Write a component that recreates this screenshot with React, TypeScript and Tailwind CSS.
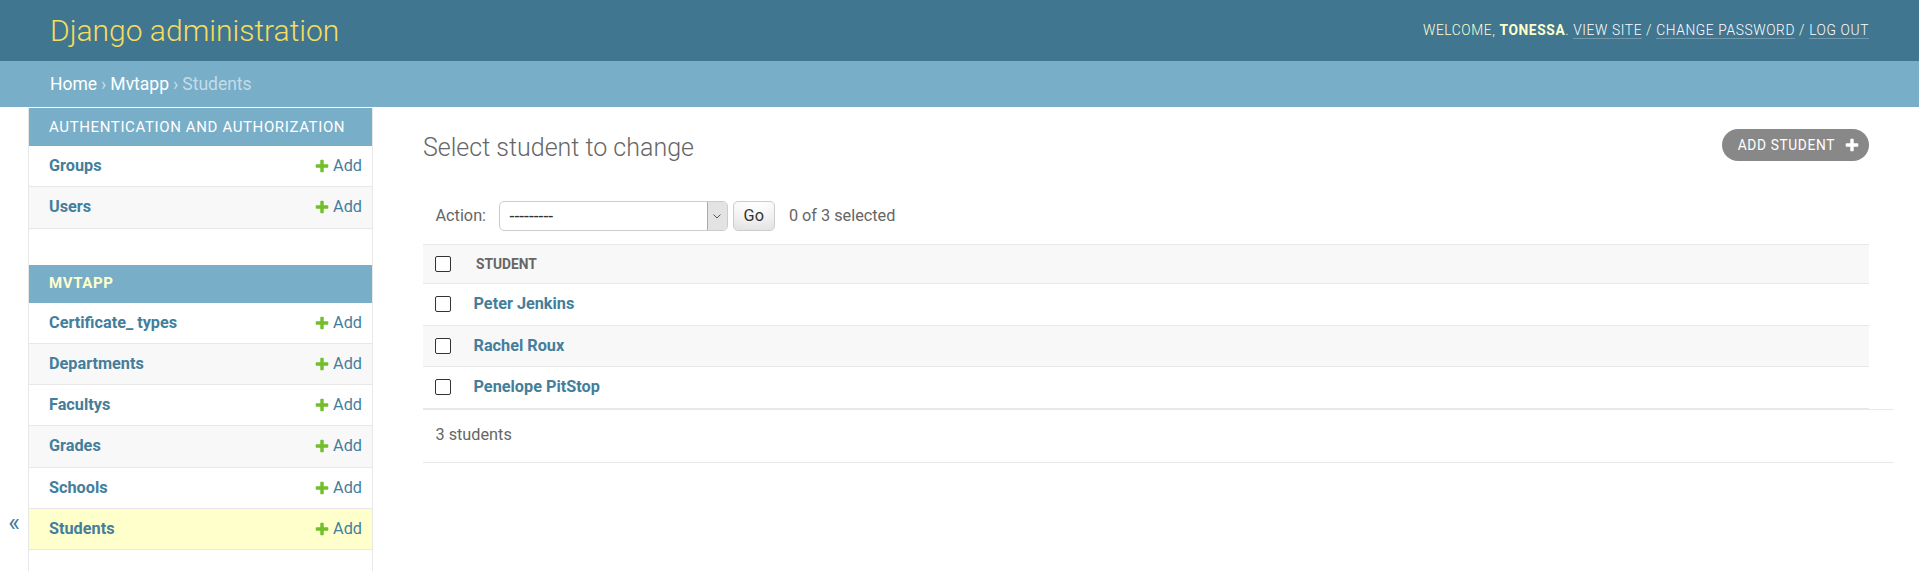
import React from "react";

// Font Awesome style plus, same one the admin uses for its add links
const plusPath =
  "M1600 796v192q0 40-28 68t-68 28h-416v416q0 40-28 68t-68 28h-192q-40 0-68-28t-28-68v-416h-416q-40 0-68-28t-28-68v-192q0-40 28-68t68-28h416v-416q0-40 28-68t68-28h192q40 0 68 28t28 68v416h416q40 0 68 28t28 68z";

const PlusIcon = ({ size, color }: { size: number; color: string }) => (
  <svg width={size} height={size} viewBox="0 0 1792 1792" aria-hidden="true">
    <path fill={color} d={plusPath} />
  </svg>
);

const apps = [
  {
    name: "Authentication and Authorization",
    current: false,
    models: ["Groups", "Users"],
  },
  {
    name: "Mvtapp",
    current: true,
    models: ["Certificate_ types", "Departments", "Facultys", "Grades", "Schools", "Students"],
  },
];

const students = ["Peter Jenkins", "Rachel Roux", "Penelope PitStop"];

const Checkbox = () => (
  <input
    type="checkbox"
    className="h-[16px] w-[16px] appearance-none rounded-[2px] border border-[#333] bg-white"
  />
);

const Sidebar = () => (
  <nav className="w-[344px] shrink-0 border-r border-[#e8e8e8] pt-px">
    {apps.map((app) => (
      <div key={app.name} className="mb-[36px]">
        <div
          className={`flex h-[38px] items-center bg-[#79aec8] pl-[20px] text-[15px] uppercase tracking-[0.625px] ${
            app.current ? "font-bold text-[#ffc]" : "text-white"
          }`}
        >
          {app.name}
        </div>
        {app.models.map((model, i) => {
          const selected = app.current && model === "Students";
          return (
            <div
              key={model}
              className={`flex h-[41.25px] items-center justify-between border-b border-[#e8e8e8] pl-[20px] pr-[10px] text-[16.25px] leading-[20px] ${
                selected ? "bg-[#ffc]" : i % 2 === 1 ? "bg-[#f8f8f8]" : "bg-white"
              }`}
            >
              <a className="font-bold text-[#447e9b]">{model}</a>
              <a className="flex items-center gap-[3px] text-[#447e9b]">
                <PlusIcon size={16} color="#70bf2b" />
                Add
              </a>
            </div>
          );
        })}
      </div>
    ))}
  </nav>
);

const App = () => {
  return (
    <div className="min-h-[571px] bg-white font-['Roboto','Liberation_Sans',sans-serif] text-[#333]">
      {/* Header */}
      <header className="flex h-[61px] items-center justify-between bg-[#417690] px-[50px]">
        <h1 className="text-[30px] font-light text-[#f5dd5d]">Django administration</h1>
        <div className="text-[13.75px] font-light uppercase tracking-[0.625px] text-[#ffc]">
          Welcome, <strong className="font-bold">Tonessa</strong>.{" "}
          <a className="border-b border-white/25 text-white">View site</a> /{" "}
          <a className="border-b border-white/25 text-white">Change password</a> /{" "}
          <a className="border-b border-white/25 text-white">Log out</a>
        </div>
      </header>

      {/* Breadcrumbs */}
      <div className="flex h-[46px] items-center bg-[#79aec8] px-[50px] text-[17.5px] text-[#c4dce8]">
        <a className="text-white">Home</a>
        <span className="mx-[4px]">›</span>
        <a className="text-white">Mvtapp</a>
        <span className="mx-[4px]">›</span>
        Students
      </div>

      <div className="flex min-h-[464px]">
        {/* Sidebar toggle */}
        <div className="flex w-[29px] shrink-0 justify-center border-r border-[#e8e8e8] pt-[401px] text-[25px] leading-[29px] text-[#447e9b]">
          «
        </div>

        <Sidebar />

        {/* Content */}
        <main className="min-w-0 flex-1 px-[50px] pt-[26px]">
          <div className="flex items-start justify-between">
            <h1 className="text-[25px] font-light leading-[30px] text-[#666]">
              Select student to change
            </h1>
            <a className="-mt-[4px] flex h-[32px] items-center gap-[9px] rounded-full bg-[#888] pl-[16px] pr-[9px] text-[13.75px] uppercase tracking-[0.625px] text-white">
              Add student
              <PlusIcon size={16} color="#fff" />
            </a>
          </div>

          {/* Actions */}
          <div className="mt-[25px] flex items-center py-[13px] pl-[12.5px] text-[16.25px] text-[#666]">
            <label>Action:</label>
            <div className="ml-[12.5px] flex h-[30px] w-[229px] rounded-[5px] border border-[#ccc] bg-white text-[17.5px] text-[#333]">
              <span className="flex flex-1 items-center pl-[10px]">---------</span>
              <span className="flex w-[20px] items-center justify-center rounded-r-[4px] border-l border-[#aaa] bg-[#e3e3e3]">
                <svg width="8" height="5" viewBox="0 0 8 5" aria-hidden="true">
                  <path d="M0.5 0.5 L4 4 L7.5 0.5" fill="none" stroke="#555" strokeWidth="1" />
                </svg>
              </span>
            </div>
            <button className="ml-[5px] h-[30px] rounded-[5px] border border-[#ccc] bg-white px-[10px] text-[16.25px] text-[#333] shadow-[inset_0_-19px_25px_-12px_rgba(0,0,0,0.15)]">
              Go
            </button>
            <span className="ml-[14px]">0 of 3 selected</span>
          </div>

          {/* Result list */}
          <div className="flex h-[40px] items-center border-y border-[#e8e8e8] bg-[#f8f8f8]">
            <div className="flex w-[38px] shrink-0 pl-[12px]">
              <Checkbox />
            </div>
            <span className="pl-[15px] text-[13.75px] font-bold uppercase text-[#666]">Student</span>
          </div>
          {students.map((name, i) => (
            <div
              key={name}
              className={`flex h-[41.5px] items-center border-b border-[#e8e8e8] ${
                i % 2 === 1 ? "bg-[#f8f8f8]" : "bg-white"
              }`}
            >
              <div className="flex w-[38px] shrink-0 pl-[12px]">
                <Checkbox />
              </div>
              <a className="pl-[12.5px] text-[16.25px] font-bold text-[#447e9b]">{name}</a>
            </div>
          ))}
          <p className="-mr-[25px] flex h-[54px] items-center border-y border-[#e8e8e8] pl-[12.5px] text-[16.25px] text-[#666]">
            3 students
          </p>
        </main>
      </div>
    </div>
  );
};

export default App;
